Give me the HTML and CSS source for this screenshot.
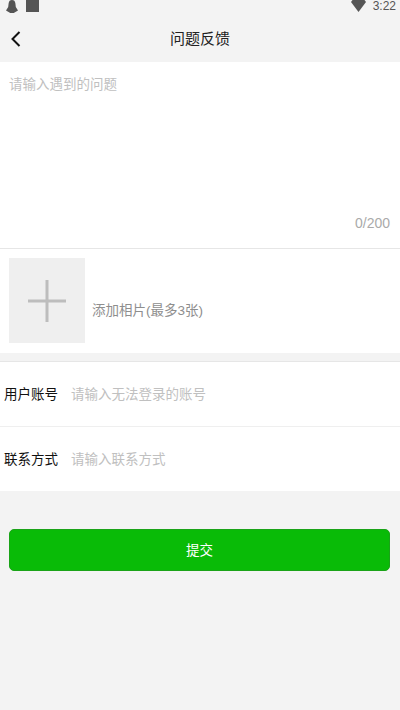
FILE: index.html
```html
<!DOCTYPE html>
<html lang="zh-CN">
  <head>
    <meta charset="UTF-8" />
    <meta name="viewport" content="width=device-width, initial-scale=1.0" />
    <title>问题反馈</title>
    <link rel="stylesheet" href="styles.css">
  </head>
  <body>
    <div class="status-bar">
      <div class="status-left">
        <svg class="status-icon" width="14" height="13" viewBox="0 0 14 13">
          <path d="M7 0C5 0 3.9 1.2 3.6 3.4L3.2 7 1 10.6 4.4 12.4 5.2 13H8.8L9.6 12.4 13 10.6 10.8 7 10.4 3.4C10.1 1.2 9 0 7 0Z" fill="#555" />
        </svg>
        <span class="status-square"></span>
      </div>
      <div class="status-right">
        <svg class="status-icon" width="15" height="12" viewBox="0 0 15 12">
          <path d="M1.5 0H13.5L15 2 7.5 12 0 2Z" fill="#555" />
        </svg>
        <span class="status-time">3:22</span>
      </div>
    </div>

    <div class="nav-bar">
      <svg class="back-icon" width="10" height="16" viewBox="0 0 10 16">
        <path d="M8.5 1 1.5 8 8.5 15" fill="none" stroke="#111" stroke-width="2" />
      </svg>
      <div class="nav-title">问题反馈</div>
    </div>

    <div class="question-box">
      <div class="placeholder">请输入遇到的问题</div>
      <div class="counter">0/200</div>
    </div>

    <div class="photo-row">
      <div class="photo-add">
        <svg width="38" height="42" viewBox="0 0 38 42">
          <path d="M19 0V42M0 21H38" fill="none" stroke="#bdbdbd" stroke-width="3" />
        </svg>
      </div>
      <span class="photo-label">添加相片(最多3张)</span>
    </div>

    <div class="form-group">
      <div class="form-row">
        <span class="form-label">用户账号</span>
        <span class="placeholder">请输入无法登录的账号</span>
      </div>
      <div class="form-row">
        <span class="form-label">联系方式</span>
        <span class="placeholder">请输入联系方式</span>
      </div>
    </div>

    <button class="submit">提交</button>
  </body>
</html>
```

FILE: styles.css
```css
body {
  font-family: "Liberation Sans", "Noto Sans CJK SC", sans-serif;
  background-color: #f3f3f3;
  margin: 0;
  padding: 0;
  min-height: 710px;
  overflow: hidden;
}

.status-bar {
  height: 13px;
  padding: 0 4px 0 5px;
  display: flex;
  justify-content: space-between;
  align-items: flex-start;
}

.status-left,
.status-right {
  display: flex;
  align-items: flex-start;
  gap: 7px;
}

.status-icon {
  display: block;
}

.status-square {
  width: 13px;
  height: 12px;
  background-color: #555;
}

.status-time {
  font-size: 12px;
  line-height: 13px;
  color: #555;
}

.nav-bar {
  height: 49px;
  position: relative;
  display: flex;
  align-items: center;
  justify-content: center;
}

.back-icon {
  position: absolute;
  left: 11px;
  top: 18px;
}

.nav-title {
  font-size: 15px;
  color: #222;
}

.question-box {
  height: 175px;
  background-color: #fff;
  border-bottom: 1px solid #e6e6e6;
  padding: 11px 9px 0;
  display: flex;
  flex-direction: column;
  justify-content: space-between;
}

.placeholder {
  font-size: 13.5px;
  color: #c0c0c0;
}

.counter {
  font-size: 14px;
  color: #aaa;
  text-align: right;
  margin-right: 1px;
  margin-bottom: 17px;
}

.photo-row {
  height: 104px;
  background-color: #fff;
  padding: 9px 9px 10px;
  box-sizing: border-box;
  display: flex;
  align-items: flex-end;
  gap: 7px;
}

.photo-add {
  width: 76px;
  height: 85px;
  background-color: #efefef;
  display: flex;
  align-items: center;
  justify-content: center;
}

.photo-label {
  font-size: 13.5px;
  color: #8e8e8e;
  margin-bottom: 24px;
}

.form-group {
  margin-top: 8px;
  background-color: #fff;
  border-top: 1px solid #e6e6e6;
}

.form-row {
  height: 64px;
  padding: 0 4px 2px;
  box-sizing: border-box;
  display: flex;
  align-items: center;
  gap: 13px;
}

.form-row + .form-row {
  height: 65px;
  border-top: 1px solid #efefef;
}

.form-label {
  font-size: 13.5px;
  color: #111;
}

.submit {
  display: block;
  width: 381px;
  height: 42px;
  margin: 38px 0 0 9px;
  padding: 0 0 3px;
  background-color: #09bb07;
  border: 1px solid #1aa318;
  border-radius: 5px;
  color: #fff;
  font-family: inherit;
  font-size: 13.5px;
}
```
